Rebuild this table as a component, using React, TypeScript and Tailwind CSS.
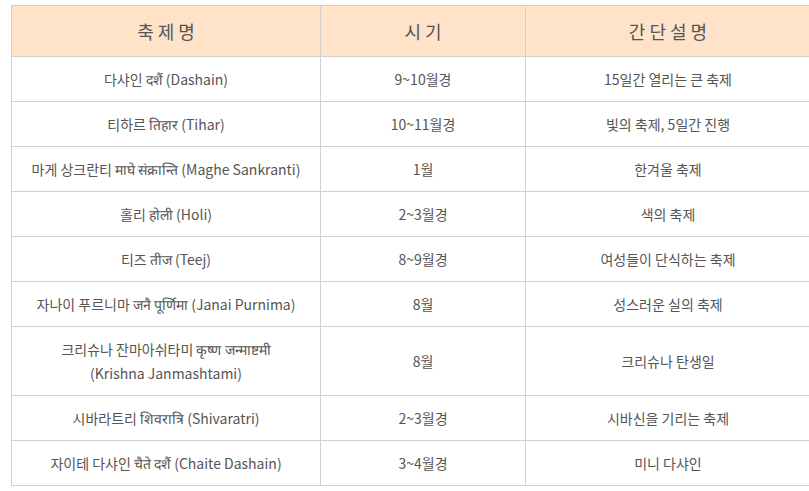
const rows: { name: string[]; period: string; desc: string }[] = [
  { name: ["다샤인 दशैं (Dashain)"], period: "9~10월경", desc: "15일간 열리는 큰 축제" },
  { name: ["티하르 तिहार (Tihar)"], period: "10~11월경", desc: "빛의 축제, 5일간 진행" },
  { name: ["마게 상크란티 माघे संक्रान्ति (Maghe Sankranti)"], period: "1월", desc: "한겨울 축제" },
  { name: ["홀리 होली (Holi)"], period: "2~3월경", desc: "색의 축제" },
  { name: ["티즈 तीज (Teej)"], period: "8~9월경", desc: "여성들이 단식하는 축제" },
  { name: ["자나이 푸르니마 जनै पूर्णिमा (Janai Purnima)"], period: "8월", desc: "성스러운 실의 축제" },
  { name: ["크리슈나 잔마아쉬타미 कृष्ण जन्माष्टमी", "(Krishna Janmashtami)"], period: "8월", desc: "크리슈나 탄생일" },
  { name: ["시바라트리 शिवरात्रि (Shivaratri)"], period: "2~3월경", desc: "시바신을 기리는 축제" },
  { name: ["자이테 다샤인 चैते दशैं (Chaite Dashain)"], period: "3~4월경", desc: "미니 다샤인" },
];

const cell = "border border-[#d0d0d0] px-2 py-[10px] text-center text-[14px] leading-[24px]";
const head = "h-[51px] border border-[#d0d0d0] text-center text-[18px] font-normal";

export default function App() {
  return (
    <div className="min-h-screen bg-white pl-[11px] pt-[5px] font-['Noto_Sans_CJK_KR',sans-serif] text-[#555]">
      <table className="w-[800px] table-fixed border-collapse">
        <colgroup>
          <col className="w-[309px]" />
          <col className="w-[205px]" />
          <col />
        </colgroup>
        <thead>
          <tr className="bg-[#fee3c9]">
            <th className={head}>축 제 명</th>
            <th className={head}>시 기</th>
            <th className={head}>간 단 설 명</th>
          </tr>
        </thead>
        <tbody>
          {rows.map((r) => (
            <tr key={r.period + r.desc}>
              <td className={cell}>
                {r.name.map((l) => (
                  <div key={l}>{l}</div>
                ))}
              </td>
              <td className={cell}>{r.period}</td>
              <td className={cell}>{r.desc}</td>
            </tr>
          ))}
        </tbody>
      </table>
    </div>
  );
}
